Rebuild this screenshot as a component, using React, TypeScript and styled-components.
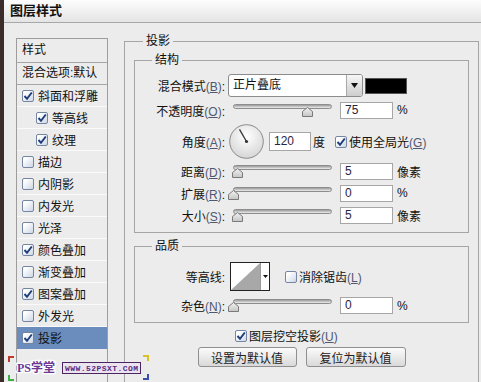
import React from 'react';
import styled, { createGlobalStyle } from 'styled-components';

const GlobalStyle = createGlobalStyle`
  html, body {
    margin: 0;
    padding: 0;
    background: #ececec;
  }
  body {
    font-family: "Liberation Sans", "Noto Sans CJK SC", sans-serif;
    font-size: 12px;
    color: #111;
  }
`;

const Window = styled.div`
  position: relative;
  width: 481px;
  height: 382px;
  overflow: hidden;
  box-sizing: border-box;
  border-left: 4px solid #3a2d2a;
  background: #ececec;
`;

const TitleBar = styled.div`
  height: 23px;
  box-sizing: border-box;
  padding-left: 6px;
  border-bottom: 1px solid #a8a8a8;
  background: linear-gradient(#fdfdfd, #e4e4e4);
  font-size: 13px;
  font-weight: bold;
  line-height: 22px;
`;

const Body = styled.div`
  display: flex;
  align-items: flex-start;
`;

const StyleList = styled.div`
  flex-shrink: 0;
  width: 92px;
  height: 360px;
  margin: 15px 0 0 12px;
  box-sizing: border-box;
  border: 1px solid #9d9d9d;
`;

const ListHeader = styled.div<{ $h: number }>`
  height: ${p => p.$h}px;
  padding-left: 5px;
  border-bottom: 1px solid #a5a5a5;
  line-height: ${p => p.$h}px;
  white-space: nowrap;
`;

const ListItem = styled.div<{ $indent?: boolean; $selected?: boolean }>`
  display: flex;
  align-items: center;
  gap: 4px;
  height: 21px;
  padding-left: ${p => (p.$indent ? 19 : 5)}px;
  border-bottom: 1px solid ${p => (p.$selected ? '#6a8dbd' : '#fafafa')};
  background: ${p => (p.$selected ? '#6a8dbd' : 'transparent')};
  white-space: nowrap;
`;

const Box = styled.span<{ $checked?: boolean }>`
  flex-shrink: 0;
  display: inline-flex;
  align-items: center;
  justify-content: center;
  width: 12px;
  height: 12px;
  box-sizing: border-box;
  border: 1px solid #7486a2;
  border-radius: 2px;
  background: linear-gradient(135deg, #ffffff 20%, #cdd7e6);
`;

const Check: React.FC<{ checked?: boolean }> = ({ checked }) => (
  <Box $checked={checked}>
    {checked && (
      <svg width="10" height="10" viewBox="0 0 10 10">
        <path d="M1.5 5 L4 7.8 L8.8 1.5" fill="none" stroke="#1d3c78" strokeWidth="1.9" />
      </svg>
    )}
  </Box>
);

const Group = styled.fieldset<{ $top: number; $pt: number; $pb: number; $h?: number }>`
  margin: ${p => p.$top}px 0 0 0;
  padding: ${p => p.$pt}px 0 ${p => p.$pb}px 0;
  box-sizing: border-box;
  min-inline-size: 0;
  width: 335px;
  border: 1px solid #a5a5a5;
`;

const OuterGroup = styled.fieldset`
  flex-shrink: 0;
  margin: 11px 0 0 16px;
  padding: 0 9px;
  box-sizing: border-box;
  min-inline-size: 0;
  width: 355px;
  height: 360px;
  border: 1px solid #a5a5a5;
`;

const Legend = styled.legend<{ $ml: number }>`
  margin-left: ${p => p.$ml}px;
  padding: 0 3px;
  font-size: 12px;
  line-height: 14px;
`;

const Row = styled.div<{ $h: number }>`
  display: flex;
  align-items: center;
  height: ${p => p.$h}px;
`;

const Label = styled.span`
  flex-shrink: 0;
  width: 90px;
  text-align: right;
  white-space: nowrap;
`;

const Key = styled.span`
  color: #4f5870;
  text-decoration: underline;
`;

const Paren = styled.span`
  color: #4f5870;
`;

const Hot: React.FC<{ k: string }> = ({ k }) => (
  <Paren>(<Key>{k}</Key>)</Paren>
);

const Select = styled.div`
  display: flex;
  width: 135px;
  height: 23px;
  margin-left: 3px;
  box-sizing: border-box;
  border: 1px solid #8c8c8c;
  border-radius: 3px;
  background: #fff;
  overflow: hidden;
`;

const SelectText = styled.span`
  flex: 1;
  padding-left: 4px;
  line-height: 21px;
`;

const SelectArrow = styled.span`
  display: flex;
  align-items: center;
  justify-content: center;
  width: 15px;
  border-left: 1px solid #a8a8a8;
  background: linear-gradient(#f6f6f6, #cdcdcd);
`;

const Swatch = styled.span`
  width: 42px;
  height: 16px;
  margin-left: 2px;
  box-sizing: border-box;
  border: 1px solid #555;
  background: #000;
`;

const SliderWrap = styled.div`
  position: relative;
  flex-shrink: 0;
  width: 99px;
  height: 13px;
  margin-left: 8px;
`;

const Track = styled.div`
  height: 5px;
  box-sizing: border-box;
  border: 1px solid #8d8d8d;
  border-radius: 3px;
  background: linear-gradient(#9a9a9a, #d4d4d4 70%, #eeeeee);
`;

const Thumb = styled.svg`
  position: absolute;
  top: 3px;
`;

const Slider: React.FC<{ value: number }> = ({ value }) => (
  <SliderWrap>
    <Track />
    <Thumb width="11" height="10" viewBox="0 0 11 10" style={{ left: value * 0.99 - 5.5 }}>
      <defs>
        <linearGradient id="thumbFill" x1="0" y1="0" x2="0" y2="1">
          <stop offset="0" stopColor="#f4f4f4" />
          <stop offset="1" stopColor="#c4c4c4" />
        </linearGradient>
      </defs>
      <path d="M0.5 9.5 V4.5 L5.5 0.5 L10.5 4.5 V9.5 Z" fill="url(#thumbFill)" stroke="#7a7a7a" />
    </Thumb>
  </SliderWrap>
);

const ValueBox = styled.span<{ $w: number; $h: number; $ml: number }>`
  flex-shrink: 0;
  width: ${p => p.$w}px;
  height: ${p => p.$h}px;
  margin-left: ${p => p.$ml}px;
  padding-left: 4px;
  box-sizing: border-box;
  border: 1px solid #a6a6a6;
  background: #fff;
  color: #2a2540;
  line-height: ${p => p.$h - 2}px;
`;

const Unit = styled.span<{ $ml: number }>`
  margin-left: ${p => p.$ml}px;
  white-space: nowrap;
`;

const Dial = styled.span`
  flex-shrink: 0;
  width: 35px;
  height: 35px;
  margin-left: 4px;
`;

const CheckLabel = styled.span<{ $ml: number }>`
  display: flex;
  align-items: center;
  gap: 2px;
  margin-left: ${p => p.$ml}px;
  white-space: nowrap;
`;

const Contour = styled.span`
  display: flex;
  width: 40px;
  height: 29px;
  margin-left: 5px;
  box-sizing: border-box;
  border: 1px solid #222;
  background: #fff;
`;

const ContourPreview = styled.span`
  flex: 1;
  display: flex;
`;

const ContourArrow = styled.span`
  display: flex;
  align-items: center;
  justify-content: center;
  width: 9px;
  border-left: 1px solid #9a9a9a;
`;

const KnockoutRow = styled.div`
  display: flex;
  align-items: center;
  height: 15px;
  margin-top: 5px;
  padding-left: 101px;
`;

const ButtonRow = styled.div`
  display: flex;
  justify-content: center;
  gap: 9px;
  margin-top: 4px;
`;

const Button = styled.button<{ $w: number }>`
  width: ${p => p.$w}px;
  height: 20px;
  padding: 0;
  border: 1px solid #8f8f8f;
  border-radius: 3px;
  background: linear-gradient(#fbfbfb, #d9d9d9);
  font-family: inherit;
  font-size: 12px;
  color: #222;
`;

const Watermark = styled.svg`
  position: absolute;
  left: 2px;
  top: 353px;
`;

const effects: { name: string; checked: boolean; indent?: boolean }[] = [
  { name: '斜面和浮雕', checked: true },
  { name: '等高线', checked: true, indent: true },
  { name: '纹理', checked: true, indent: true },
  { name: '描边', checked: false },
  { name: '内阴影', checked: false },
  { name: '内发光', checked: false },
  { name: '光泽', checked: false },
  { name: '颜色叠加', checked: true },
  { name: '渐变叠加', checked: false },
  { name: '图案叠加', checked: true },
  { name: '外发光', checked: false },
  { name: '投影', checked: true },
];

const SliderRow: React.FC<{ label: string; k: string; value: number; unit: string; h: number }> = ({ label, k, value, unit, h }) => (
  <Row $h={h}>
    <Label>{label}<Hot k={k} />:</Label>
    <Slider value={value} />
    <ValueBox $w={53} $h={17} $ml={8}>{value}</ValueBox>
    <Unit $ml={4}>{unit}</Unit>
  </Row>
);

export default function App() {
  return (
    <Window>
      <GlobalStyle />
      <TitleBar>图层样式</TitleBar>
      <Body>
        <StyleList>
          <ListHeader $h={23}>样式</ListHeader>
          <ListHeader $h={21}>混合选项:默认</ListHeader>
          {effects.map(e => (
            <ListItem key={e.name} $indent={e.indent} $selected={e.name === '投影'}>
              <Check checked={e.checked} />
              {e.name}
            </ListItem>
          ))}
        </StyleList>

        <OuterGroup>
          <Legend $ml={9}>投影</Legend>

          <Group $top={5} $pt={7} $pb={6}>
            <Legend $ml={17}>结构</Legend>
            <Row $h={23}>
              <Label>混合模式<Hot k="B" />:</Label>
              <Select>
                <SelectText>正片叠底</SelectText>
                <SelectArrow>
                  <svg width="7" height="5" viewBox="0 0 7 5"><path d="M0 0 H7 L3.5 5 Z" fill="#111" /></svg>
                </SelectArrow>
              </Select>
              <Swatch />
            </Row>
            <SliderRow label="不透明度" k="O" value={75} unit="%" h={26} />
            <Row $h={37}>
              <Label>角度<Hot k="A" />:</Label>
              <Dial>
                <svg width="35" height="35" viewBox="0 0 35 35">
                  <defs>
                    <radialGradient id="dialFill" cx="0.5" cy="0.35" r="0.65">
                      <stop offset="0" stopColor="#ffffff" />
                      <stop offset="1" stopColor="#d6d6d6" />
                    </radialGradient>
                  </defs>
                  <circle cx="17.5" cy="17.5" r="16.8" fill="url(#dialFill)" stroke="#8a8a8a" />
                  <line x1="17.5" y1="17.5" x2="10.5" y2="5.4" stroke="#333" strokeWidth="1.3" />
                  <circle cx="17.5" cy="17.5" r="1.6" fill="#333" />
                </svg>
              </Dial>
              <ValueBox $w={42} $h={19} $ml={5}>120</ValueBox>
              <Unit $ml={2}>度</Unit>
              <CheckLabel $ml={10}>
                <Check checked />
                <span>使用全局光<Hot k="G" /></span>
              </CheckLabel>
            </Row>
            <SliderRow label="距离" k="D" value={5} unit="像素" h={22} />
            <SliderRow label="扩展" k="R" value={0} unit="%" h={22} />
            <SliderRow label="大小" k="S" value={5} unit="像素" h={22} />
          </Group>

          <Group $top={6} $pt={9} $pb={2}>
            <Legend $ml={17}>品质</Legend>
            <Row $h={29}>
              <Label>等高线:</Label>
              <Contour>
                <ContourPreview>
                  <svg width="29" height="27" viewBox="0 0 29 27">
                    <path d="M0 27 L29 0 V27 Z" fill="#a8a8a8" />
                  </svg>
                </ContourPreview>
                <ContourArrow>
                  <svg width="5" height="3" viewBox="0 0 5 3"><path d="M0 0 H5 L2.5 3 Z" fill="#111" /></svg>
                </ContourArrow>
              </Contour>
              <CheckLabel $ml={15}>
                <Check />
                <span>消除锯齿<Hot k="L" /></span>
              </CheckLabel>
            </Row>
            <SliderRow label="杂色" k="N" value={0} unit="%" h={29} />
          </Group>

          <KnockoutRow>
            <CheckLabel $ml={0}>
              <Check checked />
              <span>图层挖空投影<Hot k="U" /></span>
            </CheckLabel>
          </KnockoutRow>

          <ButtonRow>
            <Button $w={99}>设置为默认值</Button>
            <Button $w={100}>复位为默认值</Button>
          </ButtonRow>
        </OuterGroup>
      </Body>

      <Watermark width="146" height="29" viewBox="0 0 146 29">
        <path d="M3 9 V4 H8" fill="none" stroke="#c0392b" strokeWidth="2" />
        <path d="M3 22 V27 H8" fill="none" stroke="#3fae49" strokeWidth="2" />
        <path d="M137 3 H142 V8" fill="none" stroke="#d8c22a" strokeWidth="2" />
        <path d="M142 21 V26 H137" fill="none" stroke="#3a4fa8" strokeWidth="2" />
        <text
          x="11" y="19" fontSize="12" fontWeight="bold"
          fontFamily='"Liberation Serif", "Noto Sans CJK SC", serif'
          fill="#6b3591" stroke="#ffffff" strokeWidth="2.5" paintOrder="stroke"
        >
          PS学堂
        </text>
        <rect x="56.5" y="9.5" width="78" height="11" fill="#ebe4f0" stroke="#4a2560" />
        <text
          x="59" y="18" fontSize="8" fontWeight="bold" textLength="73"
          fontFamily='"Liberation Mono", monospace' fill="#5a2a80"
        >
          WWW.52PSXT.COM
        </text>
      </Watermark>
    </Window>
  );
}
